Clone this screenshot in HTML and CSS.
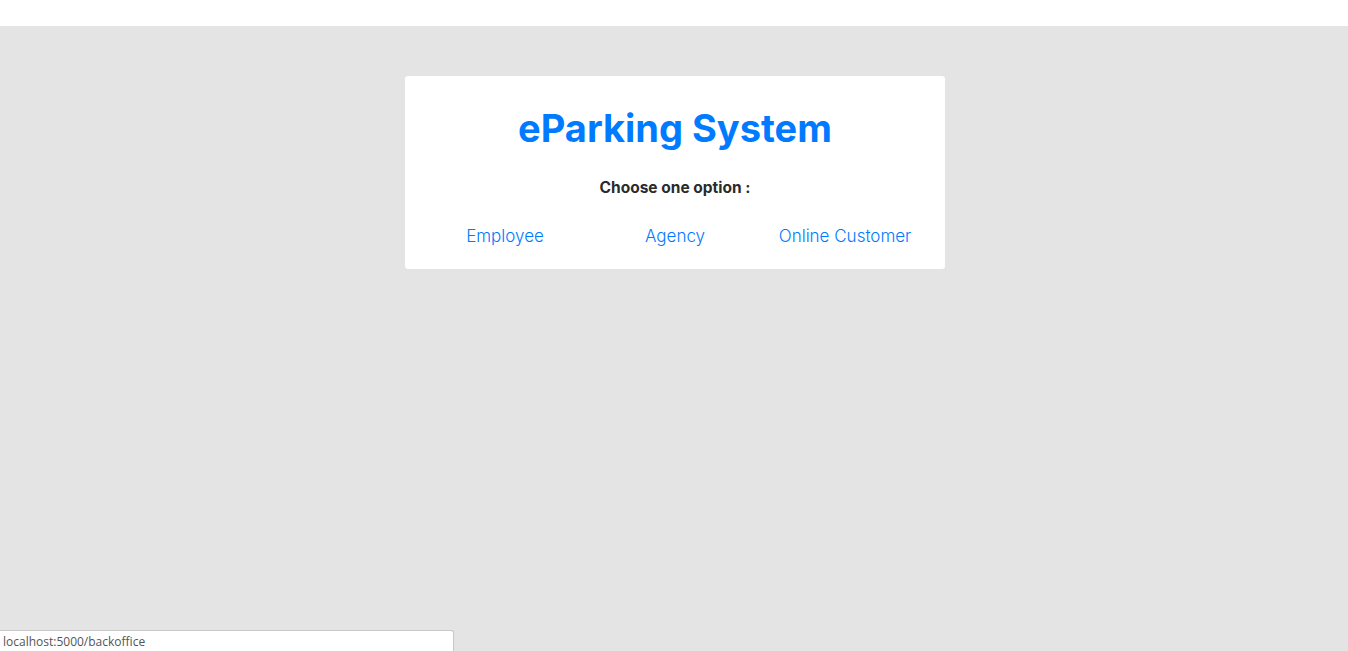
FILE: index.html
```html
<!DOCTYPE html>
<html lang="en">
<head>
<meta charset="utf-8">
<title>eParking System</title>
<link rel="stylesheet" href="styles.css">
</head>
<body>
<header class="topbar"></header>
<main class="stage">
  <section class="card">
    <h1 class="title">eParking System</h1>
    <p class="prompt">Choose one option :</p>
    <nav class="options">
      <a class="option" href="#">Employee</a>
      <a class="option" href="#">Agency</a>
      <a class="option" href="#">Online Customer</a>
    </nav>
  </section>
</main>
<div class="status">localhost:5000/backoffice</div>
</body>
</html>
```
FILE: styles.css
```css
* { box-sizing: border-box; }
html, body { margin: 0; height: 100%; }
body {
  font-family: "Inter", "Open Sans", sans-serif;
  background: #e4e4e4;
  display: flex;
  flex-direction: column;
}
.topbar { height: 26px; background: #fff; flex: none; }
.stage {
  flex: 1;
  display: flex;
  justify-content: center;
  align-items: flex-start;
  padding-top: 50px;
  padding-left: 2px;
}
.card {
  width: 540px;
  height: 193px;
  background: #fff;
  border-radius: 3px;
  padding: 24px 15px 0;
  text-align: center;
}
.title {
  margin: 0;
  font-size: 38px;
  font-weight: 700;
  color: #007bff;
  line-height: 56px;
}
.prompt {
  margin: 24px 0 0;
  font-size: 15.5px;
  font-weight: 700;
  color: #2b2b2b;
  line-height: 16px;
}
.options {
  display: grid;
  grid-template-columns: repeat(3, 1fr);
  margin-top: 30px;
}
.option {
  color: #007bff;
  text-decoration: none;
  font-size: 17px;
  font-weight: 300;
  line-height: 20px;
}
.status {
  position: fixed;
  left: 0;
  bottom: 0;
  width: 454px;
  height: 21px;
  background: #fff;
  border: 1px solid #c8c8c8;
  border-left: none;
  border-bottom: none;
  border-top-right-radius: 3px;
  font-family: "Open Sans", sans-serif;
  font-size: 12px;
  color: #555;
  padding: 3px 0 0 3px;
  line-height: 16px;
}
```
